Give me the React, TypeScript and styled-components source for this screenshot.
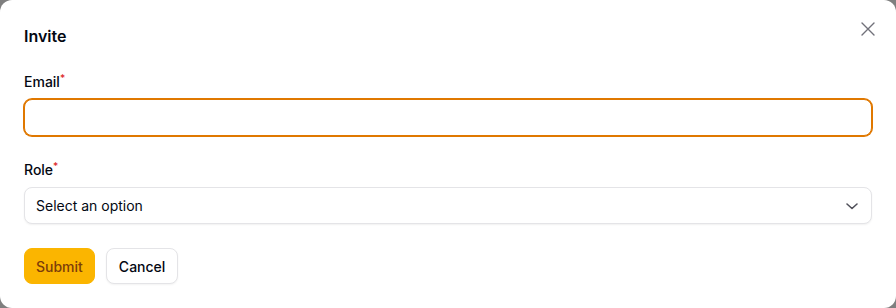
import React from "react";
import styled, { createGlobalStyle } from "styled-components";

const Global = createGlobalStyle`
  html, body { margin: 0; padding: 0; }
  body {
    background: #7f7f7f;
    font-family: Inter, "Noto Sans", "Liberation Sans", sans-serif;
    -webkit-font-smoothing: antialiased;
  }
  * { box-sizing: border-box; }
`;

const Dialog = styled.div`
  position: relative;
  width: 896px;
  height: 308px;
  background: #ffffff;
  border-radius: 12px;
  padding: 24px;
  display: flex;
  flex-direction: column;
  gap: 24px;
`;

const Title = styled.h2`
  margin: 0;
  font-size: 16px;
  line-height: 24px;
  font-weight: 600;
  color: #030712;
`;

const CloseButton = styled.button`
  position: absolute;
  top: 17px;
  right: 16px;
  width: 24px;
  height: 24px;
  padding: 0;
  border: 0;
  background: transparent;
  color: #71717a;
  display: flex;
  align-items: center;
  justify-content: center;
  cursor: pointer;
`;

const Field = styled.div`
  display: flex;
  flex-direction: column;
  gap: 7px;
`;

const Label = styled.label`
  font-size: 14px;
  line-height: 20px;
  font-weight: 500;
  color: #030712;
`;

const Required = styled.sup`
  color: #dc2626;
  font-weight: 500;
  font-size: 10px;
  margin-left: 0;
  vertical-align: top;
  line-height: 12px;
`;

const Input = styled.input<{ $focused?: boolean }>`
  height: 37px;
  width: 100%;
  border-radius: 8px;
  border: 1px solid ${(p) => (p.$focused ? "#e07800" : "#e5e7eb")};
  box-shadow: ${(p) =>
    p.$focused ? "0 0 0 1px #e07800" : "0 1px 2px rgba(0,0,0,0.05)"};
  outline: none;
  padding: 0 11px;
  font-family: inherit;
  font-size: 14px;
  background: #fff;
`;

const SelectBox = styled.div`
  height: 37px;
  width: 100%;
  border-radius: 8px;
  border: 1px solid #e4e4e7;
  box-shadow: 0 1px 2px rgba(0,0,0,0.06);
  padding: 0 11px;
  display: flex;
  align-items: center;
  justify-content: space-between;
  font-size: 14px;
  color: #030712;
  background: #fff;
`;

const Chevron = styled.span`
  display: flex;
  color: #52525b;
  margin-right: 1px;
`;

const Actions = styled.div`
  display: flex;
  gap: 11px;
`;

const Button = styled.button<{ $primary?: boolean }>`
  height: 36px;
  padding: 0 ${(p) => (p.$primary ? "11px" : "12px")};
  border-radius: 8px;
  font-family: inherit;
  font-size: 14px;
  font-weight: 500;
  cursor: pointer;
  border: 1px solid ${(p) => (p.$primary ? "#fbb500" : "#e4e4e7")};
  background: ${(p) => (p.$primary ? "#fbb500" : "#ffffff")};
  color: ${(p) => (p.$primary ? "#7c3d0a" : "#030712")};
  box-shadow: ${(p) => (p.$primary ? "none" : "0 1px 2px rgba(0,0,0,0.05)")};
`;

export default function App() {
  return (
    <>
      <Global />
      <Dialog>
        <Title>Invite</Title>
        <CloseButton aria-label="Close">
          <svg width="16" height="16" viewBox="0 0 16 16" fill="none" stroke="currentColor" strokeWidth="1.4" strokeLinecap="round">
            <path d="M2 2 L14 14 M14 2 L2 14" />
          </svg>
        </CloseButton>
        <Field>
          <Label>
            Email<Required>*</Required>
          </Label>
          <Input $focused type="email" />
        </Field>
        <Field>
          <Label>
            Role<Required>*</Required>
          </Label>
          <SelectBox>
            <span>Select an option</span>
            <Chevron>
              <svg width="14" height="14" viewBox="0 0 14 14" fill="none" stroke="currentColor" strokeWidth="1.6" strokeLinecap="round" strokeLinejoin="round">
                <path d="M2 5 L7 9.5 L12 5" />
              </svg>
            </Chevron>
          </SelectBox>
        </Field>
        <Actions>
          <Button $primary>Submit</Button>
          <Button>Cancel</Button>
        </Actions>
      </Dialog>
    </>
  );
}
